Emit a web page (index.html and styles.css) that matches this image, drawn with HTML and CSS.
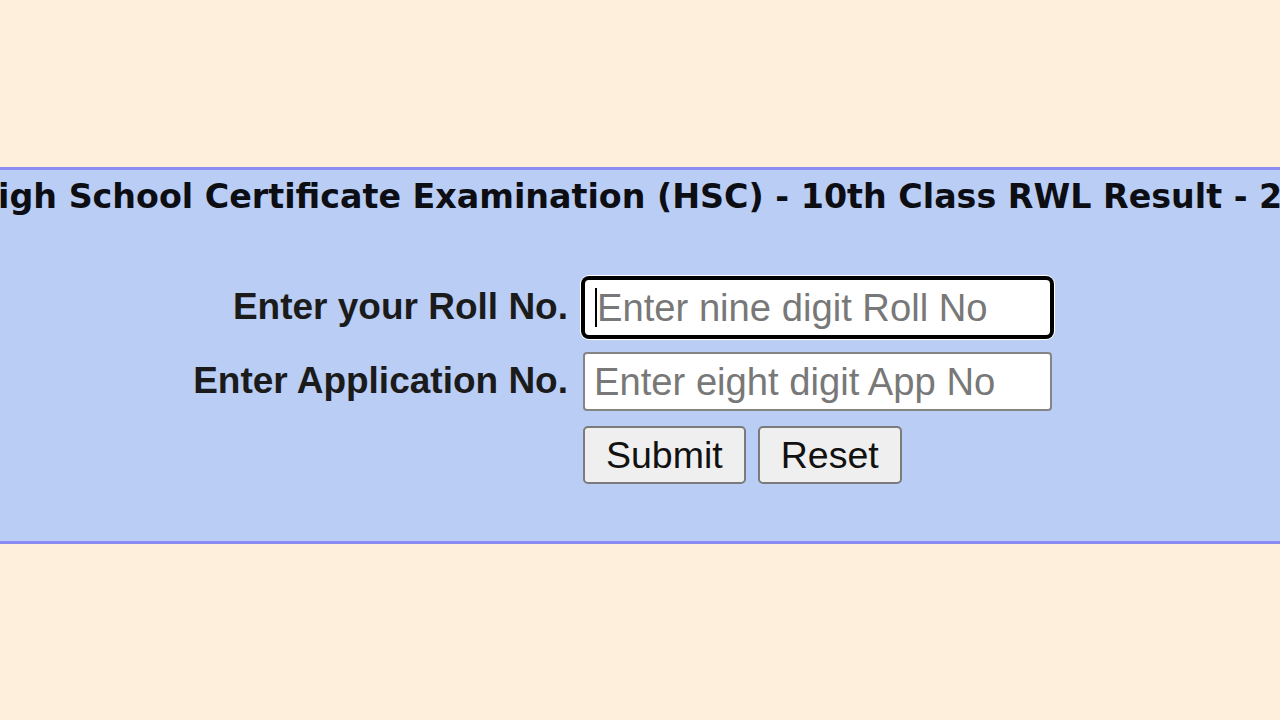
FILE: index.html
```html
<!DOCTYPE html>
<html lang="en">
<head>
<meta charset="utf-8">
<title>HSC RWL Result</title>
<link rel="stylesheet" href="styles.css">
</head>
<body>
<div class="page">
  <section class="panel">
    <div class="title-row">
      <h1 class="title">High School Certificate Examination (HSC) - 10th Class RWL Result - 2024</h1>
    </div>
    <form class="form" onsubmit="return false">
      <label class="label" for="roll">Enter your Roll No.</label>
      <div class="field">
        <input class="input focused" id="roll" type="text" placeholder="Enter nine digit Roll No">
        <span class="caret"></span>
      </div>
      <label class="label" for="app">Enter Application No.</label>
      <div class="field">
        <input class="input" id="app" type="text" placeholder="Enter eight digit App No">
      </div>
      <div class="spacer"></div>
      <div class="buttons">
        <button class="btn" type="submit">Submit</button>
        <button class="btn" type="reset">Reset</button>
      </div>
    </form>
  </section>
</div>
</body>
</html>
```
FILE: styles.css
```css
html, body {
  margin: 0;
  padding: 0;
  background: #fdefdc;
}
body {
  font-family: "Liberation Sans", Arial, sans-serif;
  height: 720px;
  overflow: hidden;
}
.page {
  padding-top: 167px;
}
.panel {
  background: #b9cdf5;
  border-top: 3px solid #8a8cf4;
  border-bottom: 3px solid #8a8cf4;
  overflow: hidden;
  padding: 7px 0 57px;
}
.title-row {
  display: flex;
  justify-content: center;
  white-space: nowrap;
}
.title {
  margin: 0 0 0 42px;
  font-family: "DejaVu Sans", Verdana, sans-serif;
  font-weight: bold;
  font-size: 33.3px;
  line-height: 40px;
  color: #0d0d14;
  flex: none;
}
.form {
  display: grid;
  grid-template-columns: 568px 469px;
  column-gap: 15px;
  row-gap: 15px;
  align-items: center;
  margin-top: 61px;
}
.label {
  justify-self: end;
  font-weight: bold;
  font-size: 37px;
  color: #1b1b1b;
  position: relative;
  top: -1px;
}
.field {
  position: relative;
  height: 59px;
}
.input {
  box-sizing: border-box;
  width: 469px;
  height: 59px;
  margin: 0;
  border: 2px solid #858585;
  border-radius: 4px;
  background: #fff;
  padding: 0 9px;
  font-family: "Liberation Sans", Arial, sans-serif;
  font-size: 38.2px;
  color: #111;
  outline: none;
}
.input::placeholder {
  color: #787878;
  opacity: 1;
}
.input.focused {
  border: 2px solid #000;
  border-radius: 6px;
  box-shadow: 0 0 0 2px #000, 0 0 0 3px #fff;
  padding-left: 12px;
}
.caret {
  position: absolute;
  left: 12px;
  top: 10px;
  width: 2px;
  height: 39px;
  background: #000;
}
.buttons {
  display: flex;
  gap: 12px;
}
.btn {
  box-sizing: border-box;
  height: 58px;
  padding: 0 21px;
  border: 2px solid #7b7b7b;
  border-radius: 5px;
  background: #efefef;
  font-family: "Liberation Sans", Arial, sans-serif;
  font-size: 37.5px;
  color: #111;
}
```
